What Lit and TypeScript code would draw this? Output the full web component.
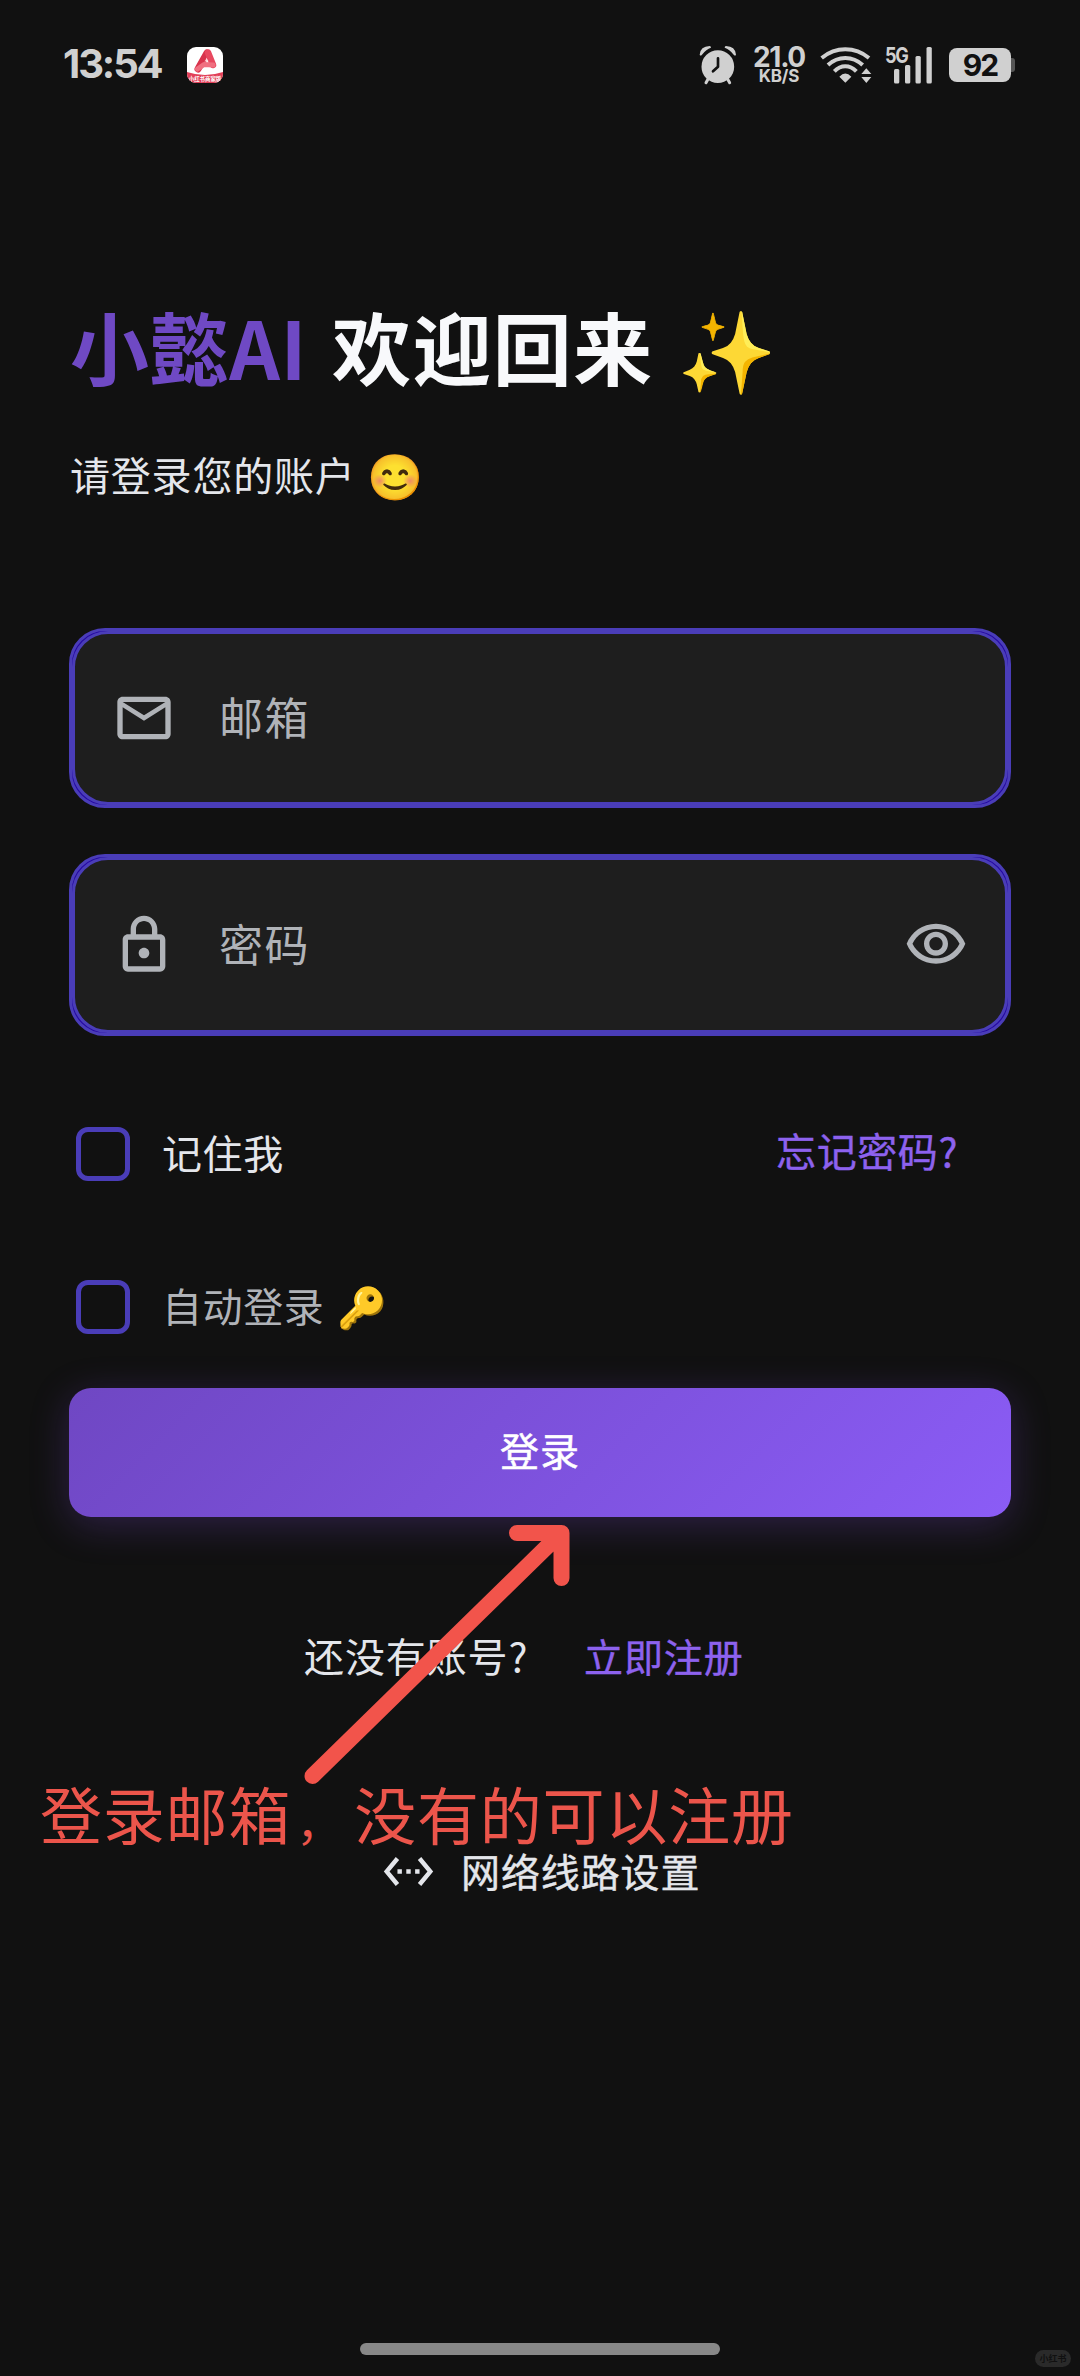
import { LitElement, html, css } from "lit";
import { customElement } from "lit/decorators.js";

@customElement("status-bar")
class StatusBar extends LitElement {
  static styles = css`
    :host { display: flex; justify-content: space-between; height: 126px; box-sizing: border-box; padding: 0 65px 0 63px; font-family: "Inter", "Noto Sans", sans-serif; font-weight: 700; color: #d0d0d0; }
    .side { display: flex; align-items: center; height: 130px; }
    .time { font-size: 40px; letter-spacing: -2.1px; line-height: 40px; width: 124px; margin-top: -3px; white-space: nowrap; }
    .speed { display: flex; flex-direction: column; align-items: center; width: 52px; margin: 0 15px 0 16px; }
    .num { font-size: 28px; line-height: 21px; letter-spacing: -1.3px; }
    .unit { font-size: 17px; line-height: 15px; margin-top: 1px; letter-spacing: -0.2px; }
    .signal { display: flex; margin-left: 13px; width: 48px; height: 38px; position: relative; }
    .net { position: absolute; left: 0; top: -3px; font-size: 22px; line-height: 24px; letter-spacing: -1.5px; transform: scaleX(.82); transform-origin: left; }
    .battery { display: flex; align-items: center; margin-left: 16px; }
    .level { width: 62px; height: 34px; border-radius: 8px; background: #d0d0d0; color: #111; font-size: 30px; letter-spacing: -2px; line-height: 35px; text-align: center; }
    .tip { width: 4px; height: 14px; border-radius: 0 3px 3px 0; background: #555; }
    svg { display: block; }
  `;
  render() {
    return html`
      <div class="side">
        <div class="time">13:54</div>
        <svg width="36" height="36" viewBox="0 0 36 36">
          <clipPath id="r"><rect width="36" height="36" rx="9" /></clipPath>
          <g clip-path="url(#r)">
            <rect width="36" height="36" fill="#fff" />
            <path d="M11 22 20 6" stroke="#d8334c" stroke-width="7" stroke-linecap="round" />
            <path d="M21 5.500 26 18" stroke="#e8485f" stroke-width="6.500" stroke-linecap="round" />
            <path d="M10.500 22 17 17.500 26 18" fill="none" stroke="#f06f80" stroke-width="5" stroke-linecap="round" stroke-linejoin="round" />
            <path d="M19.500 10.500l1.200 2.800 1 1-2.200.2-2.200-.2 1.200-1z" fill="#ffd9dd" />
            <path d="M0 25Q18 31 36 25V36H0z" fill="#e23f58" />
            <text x="18" y="34.200" font-size="5.400" text-anchor="middle" fill="#fff" font-family="Noto Sans CJK SC">小红书商家版</text>
          </g>
        </svg>
      </div>
      <div class="side">
        <svg width="38" height="40" viewBox="56 72 114 120" fill="#d0d0d0">
          <path d="M58 101Q60 76 88 75Q92 76 92 80Q78 84 65 101Q60 106 58 101zM167 101Q165 76 137 75Q133 76 133 80Q147 84 160 101Q165 106 167 101z" />
          <circle cx="112.500" cy="137" r="49" />
          <path d="M82 176l-5 9M143 176l5 9" stroke="#d0d0d0" stroke-width="9" stroke-linecap="round" />
          <path d="M113 112v25l-15 14" fill="none" stroke="#111" stroke-width="8" stroke-linecap="round" stroke-linejoin="round" />
        </svg>
        <div class="speed"><span class="num">21.0</span><span class="unit">KB/S</span></div>
        <svg width="52" height="38" viewBox="416 74 156 114" fill="none" stroke="#d0d0d0" stroke-width="12">
          <path d="M421 110Q453 84 492 84T563 110M440 131Q463 110 492 110T544 131M459 150Q474 135 492 135T525 150" />
          <path d="M492 184L474 166Q492 147 510 166zM540 158h30l-15-17zM540 167h30l-15 18z" fill="#d0d0d0" stroke="none" />
        </svg>
        <div class="signal">
          <span class="net">5G</span>
          <svg width="48" height="38" viewBox="0 0 48 38" fill="#d0d0d0">
            <rect x="9" y="23" width="5.300" height="14.500" rx="1.500" /><rect x="20" y="19" width="5.300" height="18.500" rx="1.500" />
            <rect x="30.500" y="10" width="5.300" height="27.500" rx="1.500" /><rect x="41.500" y="1" width="5.300" height="36.500" rx="1.500" />
          </svg>
        </div>
        <div class="battery"><div class="level">92</div><div class="tip"></div></div>
      </div>
    `;
  }
}

@customElement("app-root")
class AppRoot extends LitElement {
  static styles = css`
    :host { display: block; position: relative; width: 1080px; height: 2376px; overflow: hidden; background: #111; font-family: "Noto Sans CJK SC", "Noto Color Emoji", sans-serif; color: #e4e6eb; }
    svg { display: block; }
    .main { display: flex; flex-direction: column; padding: 170px 69px 0; }
    .title { display: flex; margin: 0; height: 100px; line-height: 100px; font-size: 79px; font-weight: 700; letter-spacing: 1.4px; color: #f8f9fb; white-space: pre; padding-left: 1px; }
    .brand { width: 262px; color: #6f49c4; letter-spacing: .6px; }
    .hello { width: 345px; }
    .spark { font-size: 80px; letter-spacing: 0; }
    .sub { display: flex; height: 60px; line-height: 60px; margin-top: 48px; padding-left: 1px; font-size: 40px; letter-spacing: .8px; white-space: pre; }
    .subtext { width: 297px; }
    .smile { font-size: 45px; letter-spacing: 0; }
    .field { height: 182px; box-sizing: border-box; border: 3px solid #4a3db8; border-radius: 36px; background: #2509a2; margin-top: 46px; }
    .first { margin-top: 124px; height: 180px; }
    .inner { display: flex; align-items: center; height: 100%; box-sizing: border-box; border: 3px solid #4a3db8; border-radius: 36px; background: #1e1e1e; padding: 0 37px; color: #b0b3b8; }
    .label { flex: 1; margin-left: 43px; padding-bottom: 5px; font-size: 44px; letter-spacing: 1.4px; line-height: 60px; }
    .row { display: flex; align-items: center; height: 60px; margin-top: 88px; padding: 0 53px 0 7px; font-size: 40px; line-height: 60px; letter-spacing: .6px; }
    .row span { padding-bottom: 5px; }
    .auto { margin-top: 93px; color: #b0b3b8; }
    .box { width: 54px; height: 54px; box-sizing: border-box; border: 5px solid #4a3db8; border-radius: 12px; margin-right: 32px; }
    .grow { flex: 1; }
    .row .link { padding-bottom: 9px; }
    .link { color: #8d62ee; -webkit-text-stroke: .4px #8d62ee; }
    .key { margin-left: 13px; }
    .login { height: 129px; margin-top: 51px; border: 0; padding: 0 0 7px; border-radius: 22px; background: linear-gradient(135deg, #6f47c3, #8b5cf6); box-shadow: 0 8px 38px rgba(111, 66, 193, .3); color: #fff; font: inherit; font-size: 39px; letter-spacing: 1px; -webkit-text-stroke: .5px #fff; }
    .signup { display: flex; height: 60px; line-height: 60px; margin-top: 108px; padding-left: 235px; font-size: 40px; letter-spacing: .9px; white-space: nowrap; }
    .ask { width: 280px; }
    .join { font-size: 39px; }
    .network { display: flex; align-items: center; height: 60px; line-height: 60px; margin-top: 156px; padding-left: 313px; font-size: 39px; letter-spacing: .9px; -webkit-text-stroke: .4px #e4e6eb; }
    .line { margin-left: 26px; padding-bottom: 3px; }
    .arrow { position: absolute; left: 290px; top: 1510px; }
    .note { position: absolute; left: 40px; top: 1768px; height: 90px; line-height: 90px; font-size: 62px; letter-spacing: .8px; color: #ec554b; white-space: nowrap; }
    .comma { display: inline-block; width: 58px; padding-left: 5px; font-size: 46px; }
    .home { position: absolute; left: 360px; top: 2343px; width: 360px; height: 12px; border-radius: 6px; background: #888; }
    .mark { position: absolute; left: 1035px; top: 2350px; width: 36px; height: 17px; border-radius: 9px; background: #2a2a2a; color: #111; font-size: 9px; line-height: 17px; text-align: center; font-weight: 700; }
  `;
  render() {
    return html`
      <status-bar></status-bar>
      <div class="main">
        <h1 class="title"><span class="brand">小懿AI</span><span class="hello">欢迎回来</span><span class="spark">✨</span></h1>
        <div class="sub"><span class="subtext">请登录您的账户</span><span class="smile">😊</span></div>
        <div class="field first"><div class="inner">
          <svg width="64" height="64" viewBox="0 0 24 24" fill="currentColor"><path d="M22 6c0-1.100-.9-2-2-2H4c-1.100 0-2 .9-2 2v12c0 1.100.9 2 2 2h16c1.100 0 2-.9 2-2V6zm-2 0l-8 5-8-5h16zm0 12H4V8l8 5 8-5v10z" /></svg>
          <span class="label">邮箱</span>
        </div></div>
        <div class="field"><div class="inner">
          <svg width="64" height="64" viewBox="0 0 24 24" fill="currentColor"><path d="M18 8h-1V6c0-2.760-2.240-5-5-5S7 3.240 7 6v2H6c-1.100 0-2 .9-2 2v10c0 1.100.9 2 2 2h12c1.100 0 2-.9 2-2V10c0-1.100-.9-2-2-2zM9 6c0-1.660 1.340-3 3-3s3 1.340 3 3v2H9V6zm9 14H6V10h12v10zm-6-3c1.100 0 2-.9 2-2s-.9-2-2-2-2 .9-2 2 .9 2 2 2z" /></svg>
          <span class="label">密码</span>
          <svg width="64" height="64" viewBox="0 0 24 24" fill="currentColor"><path d="M12 6c3.790 0 7.170 2.130 8.820 5.500C19.170 14.870 15.790 17 12 17s-7.170-2.130-8.820-5.500C4.830 8.130 8.210 6 12 6m0-2C7 4 2.730 7.110 1 11.500 2.730 15.890 7 19 12 19s9.270-3.110 11-7.500C21.270 7.110 17 4 12 4zm0 5c1.380 0 2.500 1.120 2.500 2.500S13.380 14 12 14s-2.500-1.120-2.500-2.500S10.620 9 12 9m0-2c-2.480 0-4.500 2.020-4.500 4.500S9.520 16 12 16s4.500-2.020 4.500-4.500S14.480 7 12 7z" /></svg>
        </div></div>
        <div class="row"><div class="box"></div><span class="grow">记住我</span><span class="link">忘记密码?</span></div>
        <div class="row auto"><div class="box"></div><span>自动登录</span><span class="key">🔑</span></div>
        <button class="login">登录</button>
        <div class="signup"><span class="ask">还没有账号?</span><span class="link join">立即注册</span></div>
        <div class="network">
          <svg width="53" height="53" viewBox="0 0 24 24" fill="currentColor"><path d="M7.770 6.760L6.230 5.480.82 12l5.410 6.520 1.540-1.280L3.420 12l4.350-5.240zM7 13h2v-2H7v2zm10-2h-2v2h2v-2zm-6 2h2v-2h-2v2zm6.770-7.520l-1.540 1.280L20.580 12l-4.350 5.240 1.540 1.280L23.180 12l-5.410-6.520z" /></svg>
          <span class="line">网络线路设置</span>
        </div>
      </div>
      <svg class="arrow" width="300" height="290" viewBox="290 1510 300 290" fill="none" stroke="#f2544b" stroke-width="16" stroke-linecap="round" stroke-linejoin="round"><path d="M312.500 1776L561 1533M517 1533H561.500V1578" /></svg>
      <div class="note">登录邮箱<span class="comma">，</span>没有的可以注册</div>
      <div class="home"></div>
      <div class="mark">小红书</div>
    `;
  }
}
